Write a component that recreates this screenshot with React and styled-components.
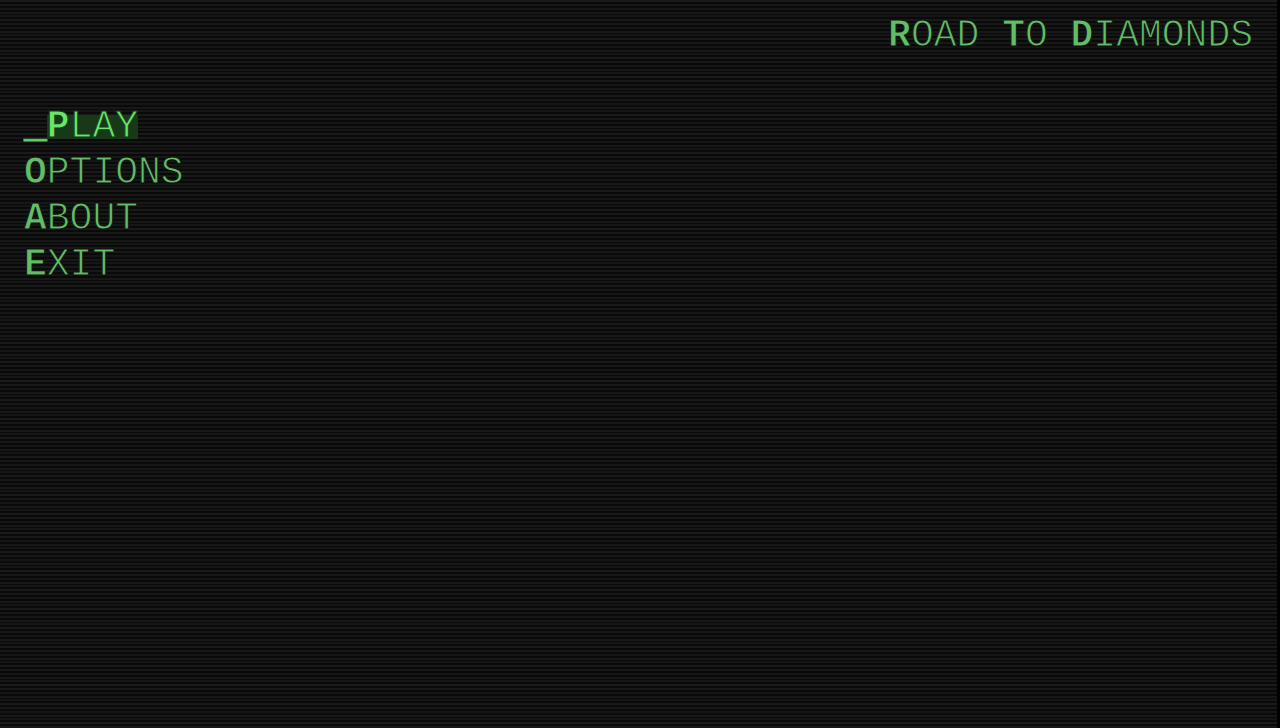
import React, { useState } from "react";
import styled, { createGlobalStyle } from "styled-components";

const GlobalStyle = createGlobalStyle`
    * {
        box-sizing: border-box;
    }

    body {
        margin: 0;
        background-color: #000;
    }
`;

// five scanlines every 19px
const Screen = styled.div`
    min-height: 100vh;
    margin-right: 3px;
    padding: 12px 24px;
    background-color: #0a0a0a;
    background-image: linear-gradient(
        #1a1a1a 0 2px,
        transparent 2px 4px,
        #181818 4px 6px,
        transparent 6px 8px,
        #161616 8px 10px,
        transparent 10px 12px,
        #181818 12px 14px,
        transparent 14px 15px,
        #161616 15px 17px,
        transparent 17px 19px
    );
    background-size: 100% 19px;
    color: #62be66;
    font-family: "Liberation Mono", "Courier New", monospace;
    font-size: 38px;
    line-height: 48px;
    text-transform: uppercase;
`;

const Title = styled.h1`
    margin: 0 0 44px;
    font-size: inherit;
    font-weight: 400;
    text-align: right;
    -webkit-text-stroke: 1px #101010;
`;

const Initial = styled.span`
    font-weight: 700;
`;

const Cursor = styled.span`
    -webkit-text-stroke: 1px #62be66;
`;

const Menu = styled.ul`
    display: flex;
    flex-direction: column;
    margin: 0;
    padding: 0;
    list-style: none;
`;

const MenuItem = styled.li`
    display: flex;
    align-items: center;
    height: 46px;
`;

const MenuButton = styled.button`
    padding: 0;
    border: none;
    background: none;
    color: ${({ $active }) => ($active ? "#66e866" : "#62be66")};
    font: inherit;
    line-height: 24px;
    text-transform: inherit;
    cursor: pointer;
`;

const Label = styled.span`
    display: inline-block;
    height: 24px;
    background-color: ${({ $active }) => ($active ? "#17391a" : "transparent")};
    -webkit-text-stroke: 1px ${({ $active }) => ($active ? "#17391a" : "#101010")};
`;

const options = ["Play", "Options", "About", "Exit"];

const App = () => {
    const [selected, setSelected] = useState("Play");

    return (
        <>
            <GlobalStyle />
            <Screen>
                <Title>
                    <Initial>R</Initial>oad <Initial>T</Initial>o <Initial>D</Initial>iamonds
                </Title>
                <Menu>
                    {options.map((option) => (
                        <MenuItem key={option}>
                            <MenuButton
                                type="button"
                                $active={option === selected}
                                onFocus={() => setSelected(option)}
                                onMouseEnter={() => setSelected(option)}
                            >
                                {option === selected && <Cursor>_</Cursor>}
                                <Label $active={option === selected}>
                                    <Initial>{option[0]}</Initial>
                                    {option.slice(1)}
                                </Label>
                            </MenuButton>
                        </MenuItem>
                    ))}
                </Menu>
            </Screen>
        </>
    );
};

export default App;
